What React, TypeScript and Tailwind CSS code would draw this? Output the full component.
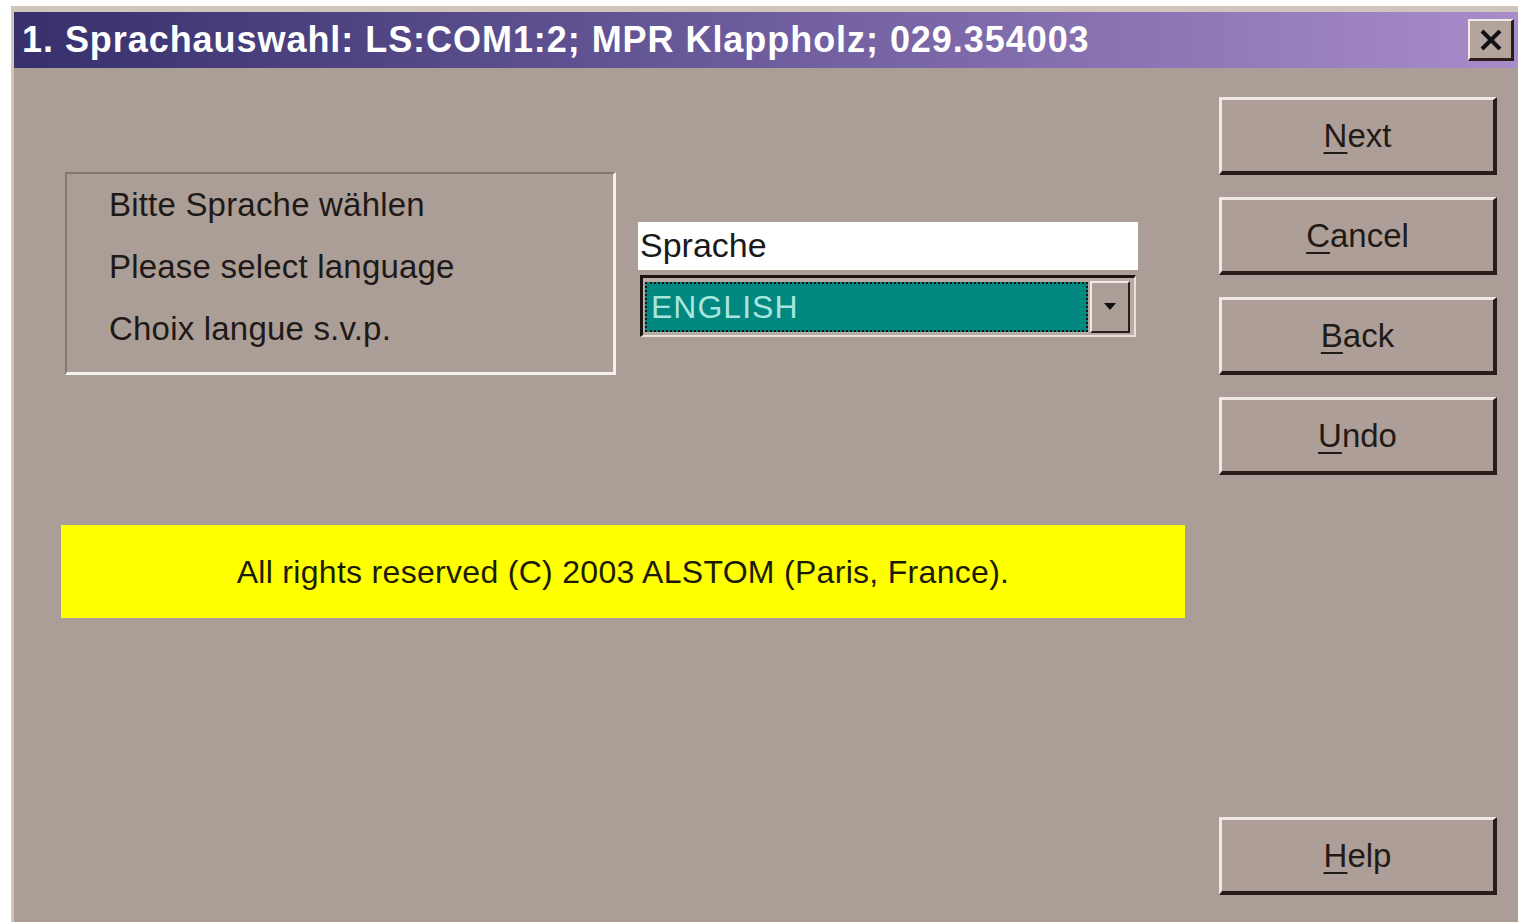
import React from "react";

const font = { fontFamily: '"Liberation Sans", Arial, sans-serif' };

function DlgButton({ label, extra = "" }: { label: string; extra?: string }) {
  const first = label.slice(0, 1);
  const rest = label.slice(1);
  return (
    <button
      className={`h-[78px] w-full bg-[#ad9f98] border-t-[3px] border-l-[3px] border-t-[#efe8e3] border-l-[#efe8e3] border-b-[4px] border-r-[4px] border-b-[#2a1d19] border-r-[#2a1d19] text-[33px] text-[#221a17] flex items-center justify-center ${extra}`}
      style={font}
    >
      <span>
        <span className="underline decoration-2 underline-offset-[5px]">{first}</span>
        {rest}
      </span>
    </button>
  );
}

export default function App() {
  return (
    <div className="w-[1518px] h-[922px] bg-white overflow-hidden" style={font}>
      <div className="ml-[11px] mt-[6px] h-[916px] bg-[#ab9e97] border-t-[6px] border-l-[3px] border-[#cfc5bd] flex flex-col">
        {/* caption bar */}
        <div className="h-[56px] flex items-center pl-[8px] pr-[4px] bg-gradient-to-r from-[#37306c] via-[#6e5d9e] to-[#a98cca]">
          <div className="flex-1 text-white font-bold text-[36px] leading-none tracking-[0.95px]">
            1. Sprachauswahl: LS:COM1:2; MPR Klappholz; 029.354003
          </div>
          <div className="w-[46px] h-[42px] bg-[#b3a59e] border-t-2 border-l-2 border-[#f1ebe6] border-b-[3px] border-r-[3px] border-b-[#2a1d19] border-r-[#2a1d19] flex items-center justify-center">
            <svg width="24" height="22" viewBox="0 0 24 22">
              <path d="M3 2 L21 20 M21 2 L3 20" stroke="#111" strokeWidth="4" />
            </svg>
          </div>
        </div>

        {/* client area */}
        <div className="flex-1 flex">
          <div className="flex-1 pl-[51px] pt-[104px]">
            <div className="flex">
              {/* prompt group */}
              <div className="w-[551px] h-[203px] border-t-2 border-l-2 border-[#83776f] border-b-[3px] border-r-[3px] border-b-[#f4f0ec] border-r-[#f4f0ec] pl-[42px] pt-0 text-[33px] tracking-[0.2px] text-[#1f1917] leading-[62px]">
                <div>Bitte Sprache wählen</div>
                <div>Please select language</div>
                <div>Choix langue s.v.p.</div>
              </div>

              {/* language selector */}
              <div className="ml-[22px] mt-[50px] w-[500px]">
                <div className="h-[48px] bg-white text-[34px] text-[#1a1a1a] leading-[46px] pl-[2px]">Sprache</div>
                <div className="mt-[5px] ml-[2px] w-[496px] h-[62px] border-t-[3px] border-l-[3px] border-[#1d1512] border-b-2 border-r-2 border-b-[#eadfd9] border-r-[#eadfd9] bg-[#b9aca5] flex items-center pl-[2px] pr-[4px]">
                  <div className="flex-1 h-[50px] bg-[#00877f] border-2 border-dotted border-[#141414] flex items-center pl-[4px] text-[32px] text-[#a6e6de] tracking-[1px]">
                    ENGLISH
                  </div>
                  <div className="ml-[2px] w-[40px] h-[52px] bg-[#ab9e97] border-t-2 border-l-2 border-[#efe8e3] border-b-2 border-r-2 border-b-[#2a1d19] border-r-[#2a1d19] flex items-center justify-center">
                    <svg width="12" height="8" viewBox="0 0 12 8">
                      <path d="M0 0 L12 0 L6 7 Z" fill="#111" />
                    </svg>
                  </div>
                </div>
              </div>
            </div>

            {/* copyright banner */}
            <div className="mt-[150px] -ml-[4px] w-[1124px] h-[93px] bg-[#ffff00] flex items-center justify-center text-[32px] text-[#1c1c05] tracking-[0.3px]">
              All rights reserved (C) 2003 ALSTOM (Paris, France).
            </div>
          </div>

          {/* command buttons */}
          <div className="w-[278px] mr-[21px] pt-[29px] pb-[27px] flex flex-col gap-[22px]">
            <DlgButton label="Next" />
            <DlgButton label="Cancel" />
            <DlgButton label="Back" />
            <DlgButton label="Undo" />
            <DlgButton label="Help" extra="mt-auto" />
          </div>
        </div>
      </div>
    </div>
  );
}
